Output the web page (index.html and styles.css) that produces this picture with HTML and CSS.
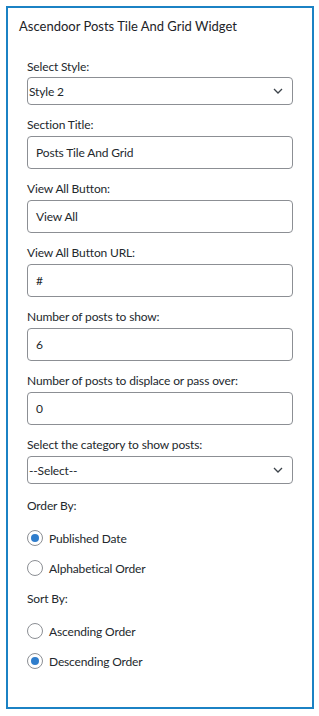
FILE: index.html
```html
<!DOCTYPE html>
<html lang="en">
<head>
  <meta charset="UTF-8">
  <meta name="viewport" content="width=device-width, initial-scale=1.0">
  <title>Widget Settings</title>
  <link rel="stylesheet" href="styles.css">
</head>
<body>
  <div class="widget">
    <h3 class="widgetTitle">Ascendoor Posts Tile And Grid Widget</h3>
    <div class="fields">
      <div class="field first">
        <label>Select Style:</label>
        <div class="select">Style 2<span class="chev"><svg width="10" height="6" viewBox="0 0 10 6"><path d="M1 1l4 4 4-4" fill="none" stroke="#3c434a" stroke-width="1.3"/></svg></span></div>
      </div>
      <div class="field">
        <label>Section Title:</label>
        <div class="input">Posts Tile And Grid</div>
      </div>
      <div class="field">
        <label>View All Button:</label>
        <div class="input">View All</div>
      </div>
      <div class="field">
        <label>View All Button URL:</label>
        <div class="input">#</div>
      </div>
      <div class="field">
        <label>Number of posts to show:</label>
        <div class="input">6</div>
      </div>
      <div class="field">
        <label>Number of posts to displace or pass over:</label>
        <div class="input">0</div>
      </div>
      <div class="field last">
        <label>Select the category to show posts:</label>
        <div class="select">--Select--<span class="chev"><svg width="10" height="6" viewBox="0 0 10 6"><path d="M1 1l4 4 4-4" fill="none" stroke="#3c434a" stroke-width="1.3"/></svg></span></div>
      </div>
      <div class="group">
        <label>Order By:</label>
        <div class="radio"><span class="dot checked"></span>Published Date</div>
        <div class="radio"><span class="dot"></span>Alphabetical Order</div>
      </div>
      <div class="group">
        <label>Sort By:</label>
        <div class="radio"><span class="dot"></span>Ascending Order</div>
        <div class="radio"><span class="dot checked"></span>Descending Order</div>
      </div>
    </div>
  </div>
</body>
</html>
```

FILE: styles.css
```css
* {
  margin: 0;
  padding: 0;
  box-sizing: border-box;
}
body {
  background: #fff;
  font-family: "Lato", sans-serif;
  font-size: 12px;
  letter-spacing: -0.15px;
  color: #23282d;
  padding: 6px 5px 6px 6px;
}

.widget {
  border: 2px solid #1b82c4;
  height: 703px;
  padding: 9px 19px 0 11px;
}
.widgetTitle {
  font-size: 13px;
  font-weight: 400;
  letter-spacing: 0;
  color: #1d2327;
  line-height: 18px;
}
.fields {
  padding-left: 8px;
  margin-top: 23px;
}
.field {
  display: flex;
  flex-direction: column;
  margin-bottom: 11px;
}
.field label {
  line-height: 18px;
  margin-bottom: 2px;
}
.field.first label {
  margin-bottom: 1px;
}
.field.last {
  margin-bottom: 13px;
}
.input,
.select {
  border: 1px solid #8c8f94;
  border-radius: 4px;
  height: 33px;
  padding: 0 8px;
  display: flex;
  align-items: center;
  color: #23282d;
}
.select {
  height: 28px;
  padding: 0 8px 0 1px;
  justify-content: space-between;
}
.chev {
  display: flex;
  margin-right: 1px;
}

.group label {
  display: block;
  line-height: 18px;
  margin-bottom: 8px;
}
.radio {
  display: flex;
  align-items: center;
  gap: 6px;
  height: 30px;
}
.group + .group {
  margin-top: 7px;
}
.dot {
  width: 16px;
  height: 16px;
  border: 1px solid #8c8f94;
  border-radius: 50%;
  display: flex;
  align-items: center;
  justify-content: center;
}
.dot.checked::after {
  content: "";
  width: 8px;
  height: 8px;
  border-radius: 50%;
  background: #2f7dcc;
}
```
